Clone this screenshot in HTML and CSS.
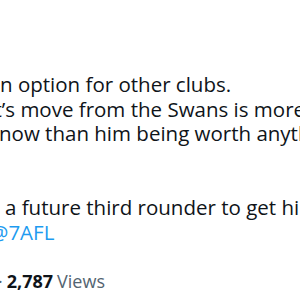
FILE: index.html
```html
<!DOCTYPE html>
<html lang="en">
<head>
<meta charset="utf-8">
<link rel="stylesheet" href="styles.css">
</head>
<body>
<main class="tweet">
  <div class="text">
    <p class="line l1">n option for other clubs.</p>
    <p class="line l2">t’s move from the Swans is more about</p>
    <p class="line l3">now than him being worth anything</p>
    <p class="line blank"></p>
    <p class="line blank"></p>
    <p class="line l5">a future third rounder to get him</p>
    <p class="line l6"><a class="mention" href="#">@7AFL</a></p>
  </div>
  <div class="meta"><span class="dot">·</span><span class="count">2,787</span><span class="views">Views</span></div>
</main>
</body>
</html>
```

FILE: styles.css
```css
html, body {
  margin: 0;
  padding: 0;
  background: #ffffff;
}
body {
  width: 300px;
  height: 300px;
  overflow: hidden;
  font-family: "Open Sans", "Noto Sans", sans-serif;
  color: #0f1419;
}
.tweet {
  display: flex;
  flex-direction: column;
  padding-top: 72px;
}
.text {
  font-size: 20.5px;
  line-height: 24.6px;
}
.line {
  margin: 0;
  white-space: nowrap;
  height: 24.6px;
}
.l1 { margin-left: 0; }
.l2 { margin-left: -5.5px; }
.l3 { margin-left: -1px; }
.l5 { margin-left: 5px; }
.l6 { margin-left: -10px; }
.mention {
  color: #1d9bf0;
  text-decoration: none;
}
.meta {
  margin-top: 26px;
  margin-left: -2px;
  font-size: 18px;
  line-height: 22px;
  white-space: nowrap;
  display: flex;
  gap: 4px;
}
.dot { color: #536471; }
.count { font-weight: 700; color: #0f1419; }
.views { color: #536471; }
```
